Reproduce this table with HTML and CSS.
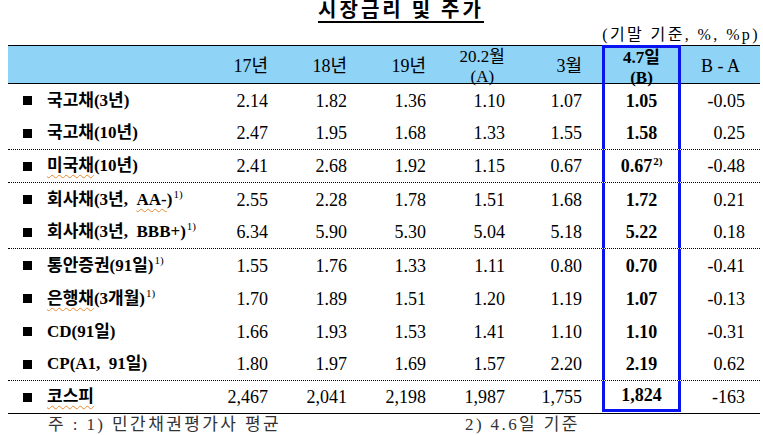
FILE: index.html
```html
<!DOCTYPE html>
<html lang="ko">
<head>
    <meta charset="UTF-8">
    <meta name="viewport" content="width=device-width, initial-scale=1.0">
    <title>시장금리 및 주가</title>
    <link rel="stylesheet" href="styles.css">
</head>
<body>
    <div class="page">
        <h1 class="title"><span>시장금리 및 주가</span></h1>
        <div class="unit">(기말 기준, %, %p)</div>
        <div class="table">
            <div class="row head">
                <div class="cell label"></div>
                <div class="cell num">17년</div>
                <div class="cell num">18년</div>
                <div class="cell num">19년</div>
                <div class="cell num"><span class="two"><span class="ln">20.2월</span><span class="ln">(A)</span></span></div>
                <div class="cell num wide">3월</div>
                <div class="cell mark"><span class="two"><span class="ln">4.7일</span><span class="ln">(B)</span></span></div>
                <div class="cell diff">B - A</div>
            </div>
            <div class="row">
                <div class="cell label"><i class="sq"></i><span>국고채(3년)</span></div>
                <div class="cell num">2.14</div>
                <div class="cell num">1.82</div>
                <div class="cell num">1.36</div>
                <div class="cell num">1.10</div>
                <div class="cell num wide">1.07</div>
                <div class="cell mark">1.05</div>
                <div class="cell num diff">-0.05</div>
            </div>
            <div class="row sep">
                <div class="cell label"><i class="sq"></i><span>국고채(10년)</span></div>
                <div class="cell num">2.47</div>
                <div class="cell num">1.95</div>
                <div class="cell num">1.68</div>
                <div class="cell num">1.33</div>
                <div class="cell num wide">1.55</div>
                <div class="cell mark">1.58</div>
                <div class="cell num diff">0.25</div>
            </div>
            <div class="row sep">
                <div class="cell label"><i class="sq"></i><span><span class="sp">미국채</span>(10년)</span></div>
                <div class="cell num">2.41</div>
                <div class="cell num">2.68</div>
                <div class="cell num">1.92</div>
                <div class="cell num">1.15</div>
                <div class="cell num wide">0.67</div>
                <div class="cell mark"><span>0.67<sup class="fn">2)</sup></span></div>
                <div class="cell num diff">-0.48</div>
            </div>
            <div class="row">
                <div class="cell label"><i class="sq"></i><span>회사채(3년,&nbsp; <span class="sp">AA-</span>)<sup class="fn">1)</sup></span></div>
                <div class="cell num">2.55</div>
                <div class="cell num">2.28</div>
                <div class="cell num">1.78</div>
                <div class="cell num">1.51</div>
                <div class="cell num wide">1.68</div>
                <div class="cell mark">1.72</div>
                <div class="cell num diff">0.21</div>
            </div>
            <div class="row sep">
                <div class="cell label"><i class="sq"></i><span>회사채(3년,&nbsp; BBB+)<sup class="fn">1)</sup></span></div>
                <div class="cell num">6.34</div>
                <div class="cell num">5.90</div>
                <div class="cell num">5.30</div>
                <div class="cell num">5.04</div>
                <div class="cell num wide">5.18</div>
                <div class="cell mark">5.22</div>
                <div class="cell num diff">0.18</div>
            </div>
            <div class="row">
                <div class="cell label"><i class="sq"></i><span>통안증권(91일)<sup class="fn">1)</sup></span></div>
                <div class="cell num">1.55</div>
                <div class="cell num">1.76</div>
                <div class="cell num">1.33</div>
                <div class="cell num">1.11</div>
                <div class="cell num wide">0.80</div>
                <div class="cell mark">0.70</div>
                <div class="cell num diff">-0.41</div>
            </div>
            <div class="row">
                <div class="cell label"><i class="sq"></i><span><span class="sp">은행채</span>(3개월)<sup class="fn">1)</sup></span></div>
                <div class="cell num">1.70</div>
                <div class="cell num">1.89</div>
                <div class="cell num">1.51</div>
                <div class="cell num">1.20</div>
                <div class="cell num wide">1.19</div>
                <div class="cell mark">1.07</div>
                <div class="cell num diff">-0.13</div>
            </div>
            <div class="row">
                <div class="cell label"><i class="sq"></i><span>CD(91일)</span></div>
                <div class="cell num">1.66</div>
                <div class="cell num">1.93</div>
                <div class="cell num">1.53</div>
                <div class="cell num">1.41</div>
                <div class="cell num wide">1.10</div>
                <div class="cell mark">1.10</div>
                <div class="cell num diff">-0.31</div>
            </div>
            <div class="row sep">
                <div class="cell label"><i class="sq"></i><span>CP(A1,&nbsp; 91일)</span></div>
                <div class="cell num">1.80</div>
                <div class="cell num">1.97</div>
                <div class="cell num">1.69</div>
                <div class="cell num">1.57</div>
                <div class="cell num wide">2.20</div>
                <div class="cell mark">2.19</div>
                <div class="cell num diff">0.62</div>
            </div>
            <div class="row last">
                <div class="cell label"><i class="sq"></i><span class="sp">코스피</span></div>
                <div class="cell num">2,467</div>
                <div class="cell num">2,041</div>
                <div class="cell num">2,198</div>
                <div class="cell num">1,987</div>
                <div class="cell num wide">1,755</div>
                <div class="cell mark">1,824</div>
                <div class="cell num diff">-163</div>
            </div>
        </div>
        <div class="notes">
            <span class="note-a">주 : 1) 민간채권평가사 평균</span>
            <span>2) 4.6일 기준</span>
        </div>
    </div>
</body>
</html>
```

FILE: styles.css
```css
body {
    margin: 0;
    background: #fff;
    color: #000;
    font-family: "Liberation Serif", "Noto Sans CJK KR", serif;
}
.page {
    padding: 0 3px 0 8px;
    width: 752px;
}
.title {
    margin: 0 0 2px;
    padding-left: 34px;
    text-align: center;
    font-size: 20px;
    font-weight: bold;
    line-height: 21px;
}
.title span {
    display: inline-block;
    letter-spacing: 3px;
    border-bottom: 2px solid #000;
}
.unit {
    height: 20px;
    line-height: 20px;
    text-align: right;
    font-size: 16px;
    letter-spacing: 2.4px;
}
.row {
    display: grid;
    grid-template-columns: 192px 79px 79px 79px 79px 86px 79px 79px;
    height: 33px;
    box-sizing: border-box;
    font-size: 18px;
}
.row.sep {
    border-bottom: 1px dotted #000;
}
.row.head {
    height: 39px;
    background: #8fd3f6;
    border-top: 1px solid #000;
    border-bottom: 1px solid #000;
}
.row.last {
    border-bottom: 1px solid #000;
}
.cell {
    display: flex;
    align-items: center;
    line-height: 20px;
}
.num {
    justify-content: flex-end;
    padding-right: 11px;
}
.num.wide {
    padding-right: 20px;
}
.num.diff {
    padding-right: 15px;
}
.head .diff {
    justify-content: center;
}
.two {
    display: flex;
    flex-direction: column;
    align-items: center;
    font-size: 17px;
    margin-top: 1px;
}
.two .ln {
    display: block;
    height: 17px;
    line-height: 17px;
}
.two .ln + .ln {
    margin-top: 3px;
}
.mark {
    justify-content: center;
    font-weight: bold;
    border-left: 3px solid #0a14f0;
    border-right: 3px solid #0a14f0;
}
.head .mark {
    margin-top: -1px;
    border-top: 3px solid #0a14f0;
}
.last .mark {
    border-bottom: 3px solid #0a14f0;
    margin-bottom: 1px;
}
.label {
    padding-left: 15px;
    font-size: 17px;
    font-weight: bold;
    white-space: nowrap;
}
.sq {
    width: 9px;
    height: 9px;
    margin-right: 15px;
    background: #000;
    flex: none;
}
.sp {
    text-decoration: underline wavy #e8862a;
    text-decoration-thickness: 1px;
    text-underline-offset: 3px;
}
.fn {
    font-size: 11px;
    font-weight: normal;
    vertical-align: 7px;
    line-height: 0;
    margin-left: 1px;
}
.mark .fn {
    font-weight: bold;
}
.notes {
    display: flex;
    padding-left: 40px;
    font-size: 17px;
    line-height: 22px;
    letter-spacing: 2.4px;
    color: #333;
}
.note-a {
    width: 417px;
}
```
